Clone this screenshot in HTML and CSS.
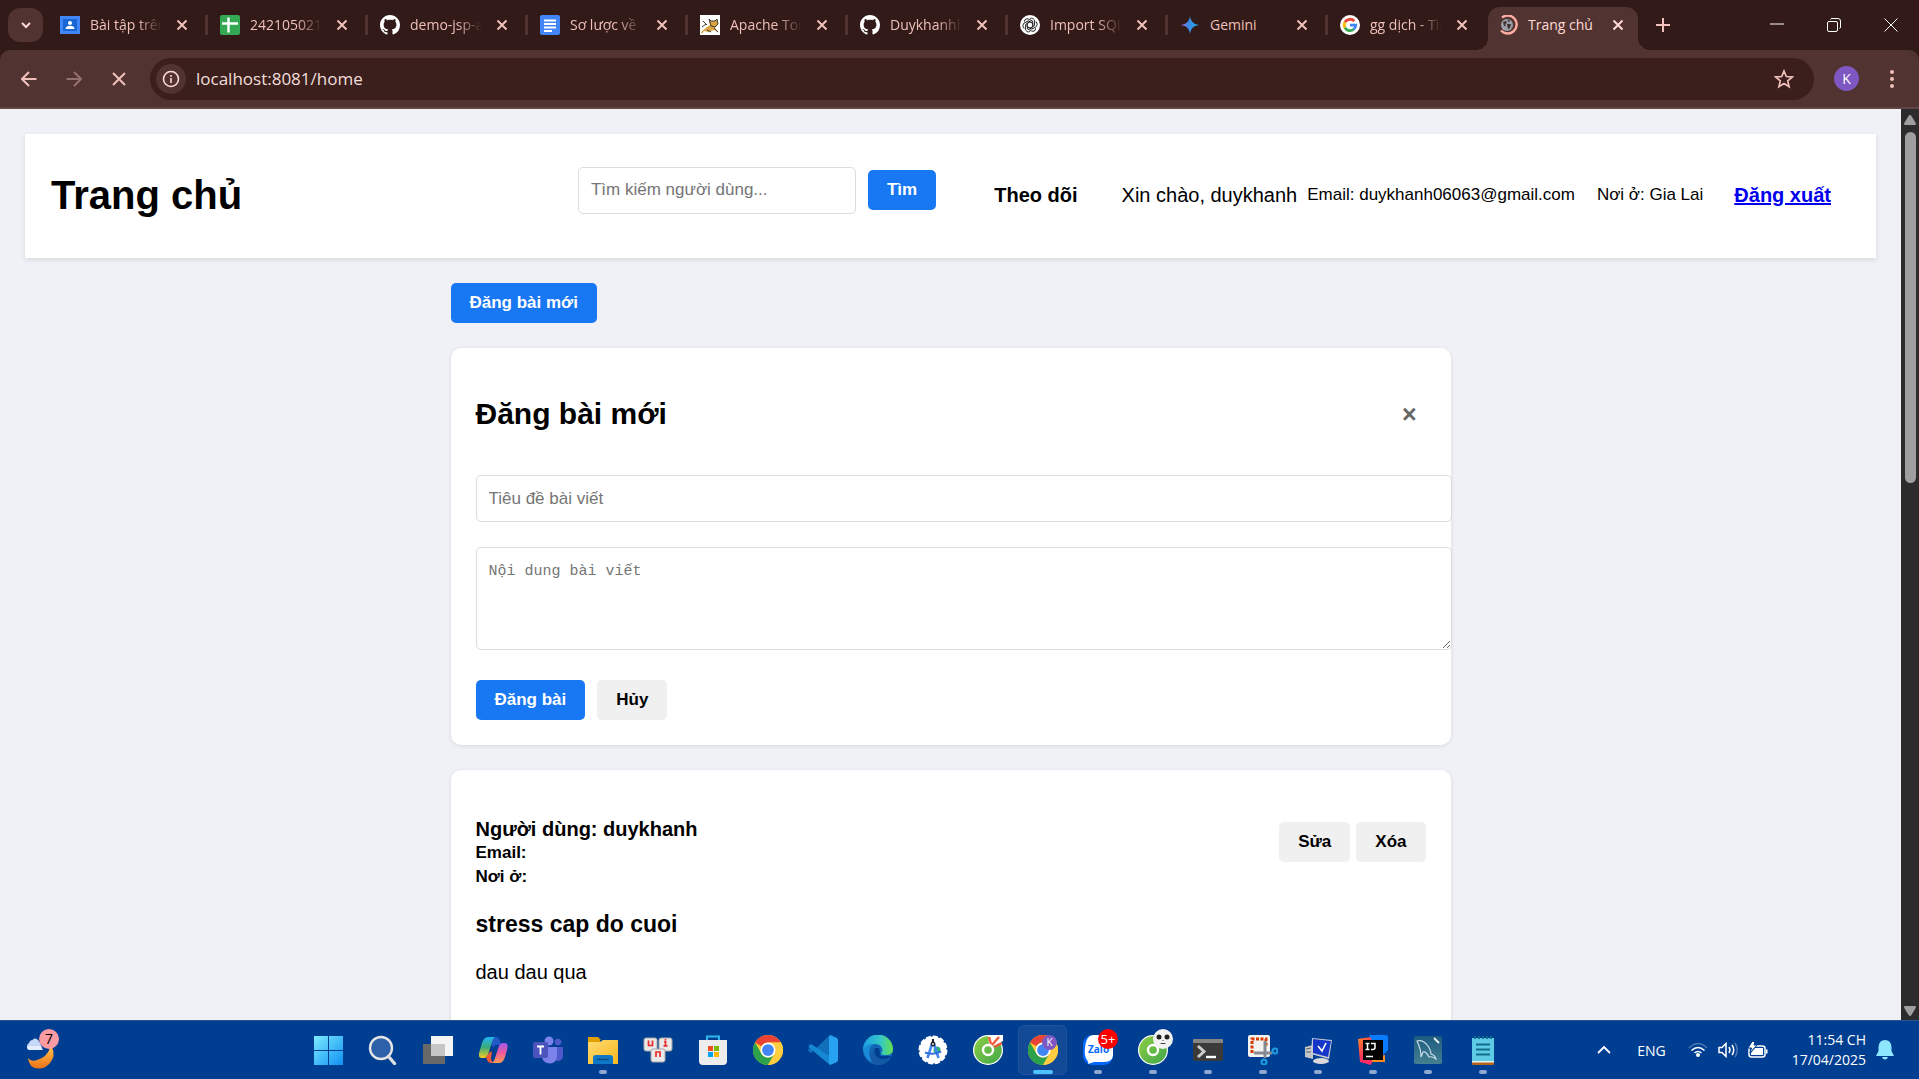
FILE: index.html
```html
<!DOCTYPE html>
<html lang="vi">
<head>
<meta charset="utf-8">
<title>Trang chủ</title>
<link rel="stylesheet" href="styles.css">
</head>
<body>
<svg class="defs" aria-hidden="true">
  <defs>
    <linearGradient id="gWin" x1="0" y1="0" x2="1" y2="1"><stop offset="0" stop-color="#7cebff"/><stop offset="1" stop-color="#0f90f2"/></linearGradient>
    <linearGradient id="gFold" x1="0" y1="0" x2="1" y2="1"><stop offset="0" stop-color="#ffdb70"/><stop offset="1" stop-color="#f8b81f"/></linearGradient>
    <linearGradient id="gMoon" x1="0" y1="0" x2="0" y2="1"><stop offset="0" stop-color="#ffc04a"/><stop offset="1" stop-color="#ee7218"/></linearGradient>
    <linearGradient id="gGem" x1="0" y1="0" x2="1" y2="0"><stop offset="0" stop-color="#a070d8"/><stop offset=".4" stop-color="#3d8ae6"/><stop offset="1" stop-color="#26a8e0"/></linearGradient>
    <linearGradient id="gCopA" x1="0" y1="0" x2="0" y2="1"><stop offset="0" stop-color="#22b4f5"/><stop offset=".5" stop-color="#3cab78"/><stop offset="1" stop-color="#f6cb22"/></linearGradient>
    <linearGradient id="gCopB" x1="0" y1="0" x2="0" y2="1"><stop offset="0" stop-color="#a257ee"/><stop offset=".5" stop-color="#ee5b9a"/><stop offset="1" stop-color="#ff9d52"/></linearGradient>
    <linearGradient id="gEdge" x1="0" y1="0" x2="1" y2="0"><stop offset="0" stop-color="#1c9fe5"/><stop offset=".6" stop-color="#35c8c4"/><stop offset="1" stop-color="#66e04c"/></linearGradient>
    <linearGradient id="gCoc" x1="0" y1="0" x2="1" y2="1"><stop offset="0" stop-color="#8fcf45"/><stop offset="1" stop-color="#3fa649"/></linearGradient>
    <linearGradient id="gIj" x1="0" y1="0" x2="1" y2="1"><stop offset="0" stop-color="#ff8a1c"/><stop offset=".5" stop-color="#ff2d63"/><stop offset="1" stop-color="#ff2d63"/></linearGradient>
    <linearGradient id="gSql" x1="0" y1="0" x2="0" y2="1"><stop offset="0" stop-color="#1e5a80"/><stop offset="1" stop-color="#44808f"/></linearGradient>
    <symbol id="x" viewBox="0 0 12 12"><path d="M1.5 1.5l9 9M10.5 1.5l-9 9" fill="none" stroke="currentColor" stroke-width="2"/></symbol>
    <symbol id="github" viewBox="0 0 16 16"><path fill="#fff" d="M8 0C3.58 0 0 3.58 0 8c0 3.54 2.29 6.53 5.47 7.59.4.07.55-.17.55-.38 0-.19-.01-.82-.01-1.49-2.01.37-2.53-.49-2.69-.94-.09-.23-.48-.94-.82-1.13-.28-.15-.68-.52-.01-.53.63-.01 1.08.58 1.23.82.72 1.21 1.87.87 2.33.66.07-.52.28-.87.51-1.07-1.78-.2-3.64-.89-3.64-3.95 0-.87.31-1.59.82-2.15-.08-.2-.36-1.02.08-2.12 0 0 .67-.21 2.2.82.64-.18 1.32-.27 2-.27s1.36.09 2 .27c1.53-1.04 2.2-.82 2.2-.82.44 1.1.16 1.92.08 2.12.51.56.82 1.27.82 2.15 0 3.07-1.87 3.75-3.65 3.95.29.25.54.73.54 1.48 0 1.07-.01 1.93-.01 2.2 0 .21.15.46.55.38A8.01 8.01 0 0 0 16 8c0-4.42-3.58-8-8-8z"/></symbol>
    <symbol id="chrome" viewBox="0 0 48 48"><circle cx="24" cy="24" r="24" fill="#fc3"/><path fill="#ea4335" d="M24 0a24 24 0 0 1 20.8 12H24a12 12 0 0 0-10.4 6L3.2 12A24 24 0 0 1 24 0z"/><path fill="#2ca24c" d="M3.2 12l10.4 18A12 12 0 0 0 24 36c4 0 8-2 10.4-6L24 48A24 24 0 0 1 3.2 12z"/><path fill="#ffcd3f" d="M44.8 12A24 24 0 0 1 24 48l10.4-18A12 12 0 0 0 24 12z"/><circle cx="24" cy="24" r="12" fill="#fff"/><circle cx="24" cy="24" r="9.4" fill="#4285f4"/></symbol>
    <symbol id="coc" viewBox="0 0 30 30"><circle cx="15" cy="15" r="14.4" fill="url(#gCoc)" stroke="#fff" stroke-width="1.2"/><circle cx="15" cy="15" r="5" fill="none" stroke="#fff" stroke-width="2.4"/></symbol>
  </defs>
</svg>

<header class="browser">
  <div class="tabstrip">
    <button class="tab-search" aria-label="Tìm thẻ"><svg viewBox="0 0 12 12" width="12" height="12"><path d="M2 4l4 4 4-4" fill="none" stroke="currentColor" stroke-width="2"/></svg></button>
    <div class="tab"><svg class="fav" viewBox="0 0 20 20"><path fill="#4285f4" d="M0 1h20v18H0z"/><path fill="#1967d2" d="M3 4h14v12H3z"/><circle cx="10" cy="8" r="2" fill="#fff"/><path fill="#fff" d="M5.500 14c0-2.500 2-3.300 4.500-3.300s4.500.8 4.500 3.300z"/></svg><span class="title">Bài tập trên lớp</span><button class="close" aria-label="Đóng"><svg><use href="#x"/></svg></button></div>
    <div class="tab"><svg class="fav" viewBox="0 0 20 20"><rect width="20" height="20" rx="2" fill="#34a853"/><path d="M2 8.500h16M8.500 2.500v15" stroke="#fff" stroke-width="2.400"/></svg><span class="title">2421050214 - bài</span><button class="close" aria-label="Đóng"><svg><use href="#x"/></svg></button></div>
    <div class="tab"><svg class="fav"><use href="#github"/></svg><span class="title">demo-jsp-app</span><button class="close" aria-label="Đóng"><svg><use href="#x"/></svg></button></div>
    <div class="tab"><svg class="fav" viewBox="0 0 20 20"><rect width="20" height="20" rx="2" fill="#4285f4"/><path d="M4 5.500h12M4 9h12M4 12.500h12M4 16h8" stroke="#fff" stroke-width="2"/></svg><span class="title">Sơ lược về web</span><button class="close" aria-label="Đóng"><svg><use href="#x"/></svg></button></div>
    <div class="tab"><svg class="fav" viewBox="0 0 20 20"><path fill="#fff" d="M0 0h20v20H0z"/><path d="M1 17l6-5 3-2-1-6 2 2h4l2-2 1 5-3 4 4 5-5-3-5 2-5-1-2 3z" fill="#d9a441"/><path d="M2 12l4-3M3 6l4 4M9 4l2 2h4l2-2 1 5-3 3-4-1zM7 15l4 2M14 13l4 4" fill="none" stroke="#3b3b30"/></svg><span class="title">Apache Tomcat</span><button class="close" aria-label="Đóng"><svg><use href="#x"/></svg></button></div>
    <div class="tab"><svg class="fav"><use href="#github"/></svg><span class="title">Duykhanhhhhh</span><button class="close" aria-label="Đóng"><svg><use href="#x"/></svg></button></div>
    <div class="tab"><svg class="fav" viewBox="0 0 20 20"><circle cx="10" cy="10" r="10" fill="#fff"/><g fill="none" stroke="#222" stroke-width=".9"><path d="M10 3.500a3 3 0 0 1 4.500 2.500v4.500L10 13.300l-2.500-1.400"/><path d="M10 3.500a3 3 0 0 1 4.500 2.500v4.500L10 13.300l-2.500-1.400" transform="rotate(60 10 10)"/><path d="M10 3.500a3 3 0 0 1 4.500 2.500v4.500L10 13.300l-2.500-1.400" transform="rotate(120 10 10)"/><path d="M10 3.500a3 3 0 0 1 4.500 2.500v4.500L10 13.300l-2.500-1.400" transform="rotate(180 10 10)"/><path d="M10 3.500a3 3 0 0 1 4.500 2.500v4.500L10 13.300l-2.500-1.400" transform="rotate(240 10 10)"/><path d="M10 3.500a3 3 0 0 1 4.500 2.500v4.500L10 13.300l-2.500-1.400" transform="rotate(300 10 10)"/></g></svg><span class="title">Import SQL file</span><button class="close" aria-label="Đóng"><svg><use href="#x"/></svg></button></div>
    <div class="tab"><svg class="fav" viewBox="0 0 20 20"><path fill="url(#gGem)" d="M10 1c.8 5.500 3.500 8.200 9 9-5.500.8-8.200 3.500-9 9-.8-5.500-3.500-8.200-9-9 5.500-.8 8.200-3.500 9-9z"/></svg><span class="title whole">Gemini</span><button class="close" aria-label="Đóng"><svg><use href="#x"/></svg></button></div>
    <div class="tab"><svg class="fav" viewBox="0 0 20 20"><circle cx="10" cy="10" r="10" fill="#fff"/><g fill="none" stroke-width="2.800"><path d="M14.300 6.200A5.700 5.700 0 0 0 5 7.200" stroke="#ea4335"/><path d="M5 7.200a5.700 5.700 0 0 0 0 5.600" stroke="#fbbc04"/><path d="M5 12.800a5.700 5.700 0 0 0 8.700 1.500" stroke="#34a853"/><path d="M13.700 14.300a5.700 5.700 0 0 0 2-4.100H10" stroke="#4285f4"/></g></svg><span class="title">gg dịch - Tìm trên</span><button class="close" aria-label="Đóng"><svg><use href="#x"/></svg></button></div>
    <div class="tab active"><svg class="fav" viewBox="0 0 20 20"><path d="M4 2.500a9 9 0 1 1-1 13" fill="none" stroke="#ffada3" stroke-width="2.400"/><circle cx="9" cy="10" r="6" fill="#9aa0a6"/><path d="M5 7l3-1 1 2-2 1 1 2-2 0zM9 9l4 0-1 4-2 1zM9 4.500l3 1-1 2z" fill="#40302f"/></svg><span class="title whole">Trang chủ</span><button class="close" aria-label="Đóng"><svg><use href="#x"/></svg></button></div>
    <button class="new-tab" aria-label="Thẻ mới"><svg viewBox="0 0 14 14" width="14" height="14"><path d="M7 0v14M0 7h14" stroke="currentColor" stroke-width="2"/></svg></button>
    <div class="window-controls">
      <button aria-label="Thu nhỏ"><svg viewBox="0 0 14 14" width="14" height="14"><path d="M0 6h14" stroke="currentColor"/></svg></button>
      <button aria-label="Khôi phục"><svg viewBox="0 0 14 14" width="14" height="14"><g fill="none" stroke="currentColor"><rect x=".5" y="3.500" width="10" height="10" rx="1.500"/><path d="M3.500 1.500q.3-1 1.500-1h6q2.500 0 2.500 2.500v6q0 1.200-1 1.500"/></g></svg></button>
      <button aria-label="Đóng cửa sổ"><svg viewBox="0 0 14 14" width="14" height="14"><path d="M.5.5l13 13M13.500.5l-13 13" stroke="currentColor"/></svg></button>
    </div>
  </div>
  <div class="toolbar">
    <button class="nav" aria-label="Quay lại"><svg viewBox="0 0 16 16"><path d="M15.500 8H1.500M8 1L1 8l7 7" fill="none" stroke="currentColor" stroke-width="2"/></svg></button>
    <button class="nav dim" aria-label="Tiến"><svg viewBox="0 0 16 16"><path d="M.5 8h14M8 1l7 7-7 7" fill="none" stroke="currentColor" stroke-width="2"/></svg></button>
    <button class="nav" aria-label="Dừng"><svg viewBox="0 0 16 16"><path d="M2 2l12 12M14 2L2 14" fill="none" stroke="currentColor" stroke-width="2"/></svg></button>
    <div class="omnibox">
      <button class="info" aria-label="Thông tin trang"><svg viewBox="0 0 18 18" width="18" height="18"><circle cx="9" cy="9" r="7.500" fill="none" stroke="currentColor" stroke-width="1.600"/><path d="M9 8v5M9 5v1.800" stroke="currentColor" stroke-width="1.600"/></svg></button>
      <input class="url" type="text" value="localhost:8081/home" aria-label="Địa chỉ">
      <button class="star" aria-label="Đánh dấu"><svg viewBox="0 0 20 20" width="20" height="20"><path d="M10 2l2.300 5.500 6 .5-4.600 3.900 1.400 5.800L10 14.600l-5.100 3.100 1.400-5.800L1.700 8l6-.5z" fill="none" stroke="currentColor" stroke-width="1.700"/></svg></button>
    </div>
    <button class="avatar" aria-label="Hồ sơ">K</button>
    <button class="dots" aria-label="Trình đơn"><svg viewBox="0 0 4 18" width="4" height="18"><g fill="currentColor"><circle cx="2" cy="2" r="2"/><circle cx="2" cy="9" r="2"/><circle cx="2" cy="16" r="2"/></g></svg></button>
  </div>
</header>

<div class="viewport">
  <div class="page">
    <header class="site-header">
      <h1>Trang chủ</h1>
      <form class="search">
        <input class="field" type="text" placeholder="Tìm kiếm người dùng..." aria-label="Tìm kiếm người dùng">
        <button class="btn primary" type="button">Tìm</button>
      </form>
      <nav class="user-nav">
        <strong class="follow">Theo dõi</strong>
        <span class="hello">Xin chào, duykhanh</span>
        <span class="meta">Email: duykhanh06063@gmail.com</span>
        <span class="meta place">Nơi ở: Gia Lai</span>
        <a class="logout" href="#">Đăng xuất</a>
      </nav>
    </header>
    <main class="feed">
      <button class="btn primary open-form" type="button">Đăng bài mới</button>
      <section class="card">
        <div class="form-head">
          <h2>Đăng bài mới</h2>
          <button class="dismiss" type="button" aria-label="Đóng">×</button>
        </div>
        <form class="post-form">
          <input class="field" type="text" placeholder="Tiêu đề bài viết" aria-label="Tiêu đề bài viết">
          <textarea class="field body" placeholder="Nội dung bài viết" aria-label="Nội dung bài viết"></textarea>
          <div class="actions">
            <button class="btn primary" type="button">Đăng bài</button>
            <button class="btn" type="button">Hủy</button>
          </div>
        </form>
      </section>
      <article class="card">
        <div class="post-head">
          <div class="author">
            <h4>Người dùng: duykhanh</h4>
            <p>Email:</p>
            <p>Nơi ở:</p>
          </div>
          <div class="post-tools">
            <button class="btn" type="button">Sửa</button>
            <button class="btn" type="button">Xóa</button>
          </div>
        </div>
        <h3>stress cap do cuoi</h3>
        <p class="post-text">dau dau qua</p>
      </article>
    </main>
  </div>
  <div class="scrollbar" aria-hidden="true">
    <svg viewBox="0 0 12 10" width="12" height="10"><path d="M6 0q.8 0 1.300.8L12 8.500q0 1.500-1 1.500H1q-1 0-1-1.500L4.700.8Q5.200 0 6 0z" fill="#9f9f9f"/></svg>
    <div class="thumb"></div>
    <svg viewBox="0 0 12 10" width="12" height="10"><path d="M6 10q.8 0 1.300-.8L12 1.500Q12 0 11 0H1Q0 0 0 1.500l4.700 7.700q.5.800 1.300.8z" fill="#9f9f9f"/></svg>
  </div>
</div>

<footer class="taskbar">
  <button class="widgets" aria-label="Thời tiết"><svg viewBox="0 0 36 44" width="36" height="44"><path d="M3 31q3 4 9 2 10-3 13-12l2-1q4 9-2 16-5 6-12 5.500Q4 41 3 31z" fill="url(#gMoon)"/><path d="M4 23a4 4 0 0 1 0-7q1-3 3.500-3Q11 9 15 16l3 7z" fill="#c6d8f8"/><path d="M2 19h14v4H4q-2-1-2-4z" fill="#e3edff"/><circle cx="24" cy="12" r="10" fill="#ff9ba3"/></svg><span class="badge">7</span></button>
  <div class="apps">
    <button class="app" aria-label="Start"><svg viewBox="0 0 30 30"><path fill="url(#gWin)" d="M1 1h14v14H1zM16 1h14v14H16zM1 16h14v14H1zM16 16h14v14H16z"/></svg></button>
    <button class="app" aria-label="Tìm kiếm"><svg viewBox="0 0 30 30"><circle cx="13" cy="13" r="11" fill="#2c60a8" stroke="#e4e4e4" stroke-width="2.400"/><path d="M20.500 21.500l6 7" stroke="#dedede" stroke-width="3.400" stroke-linecap="round"/></svg></button>
    <button class="app" aria-label="Chế độ xem"><svg viewBox="0 0 30 30"><path fill="#686868" d="M0 9h22v20H0z"/><path fill="#f5f5f5" d="M8 1h22v20H8z"/><path fill="#c6c6c6" d="M8 9h14v12H8z"/></svg></button>
    <button class="app" aria-label="Copilot"><svg viewBox="0 0 30 30"><path fill="#2558c7" d="M10 2h8q3 0 4 4l1 4h-5q-2 0-3 3z"/><path fill="url(#gCopA)" d="M10 2h7q-2 1-3 5l-4 13q-1 3-4 3H4q-4 0-3-5L4 8q2-6 6-6z"/><path fill="#ee5a33" d="M8 21q2 0 3-3l3-2-1 8q1 4 4 4h-4q-4 0-5-7z"/><path fill="url(#gCopB)" d="M21 28h-7q2-1 3-5l4-12q1-3 4-3h2q3 0 2.500 5L27 22q-2 6-6 6z"/></svg></button>
    <button class="app" aria-label="Teams"><svg viewBox="0 0 30 30"><circle cx="16" cy="6" r="4.500" fill="#7b83eb"/><circle cx="25" cy="7" r="3.300" fill="#5059c9"/><path d="M21 12h9v9a5 5 0 0 1-8 4z" fill="#5059c9"/><path d="M9 12h15v10q-1 6-7 6.500Q10 28 9 22z" fill="#7b83eb"/><rect y="7" width="15" height="16" rx="2" fill="#4b53bc"/><path d="M4 11.500h7M7.500 11.500v8" stroke="#fff" stroke-width="1.800"/></svg></button>
    <button class="app run" aria-label="Thư mục"><svg viewBox="0 0 30 30"><path d="M0 2h10l3 3h-1v4H0z" fill="#e0a100"/><path d="M0 7h12l3-2h15v24H0z" fill="url(#gFold)"/><path d="M5 29v-6q0-3 3-3h14q3 0 3 3v6z" fill="#0f78c6"/><path d="M9 24.500h12" stroke="#094c84" stroke-width="1.400"/></svg></button>
    <button class="app" aria-label="UniKey"><svg viewBox="0 0 30 30"><g fill="#e9e9e9" stroke="#a7a7a7"><rect x="1" y="3" width="13" height="13" rx="2"/><rect x="16" y="3" width="13" height="13" rx="2"/><rect x="8" y="14" width="14" height="13" rx="2"/></g><g fill="none" stroke="#ed2a2a" stroke-width="1.700"><path d="M5.500 5.500v5h4v-5M21 6.500h1.500v4M20.500 10.800h4M22.500 4v1.300M13 22v-5h4v5"/></g></svg></button>
    <button class="app" aria-label="Store"><svg viewBox="0 0 30 30"><path d="M9 6V1.500h12V6" fill="none" stroke="#31b7ee" stroke-width="2"/><path d="M1 5h28v21q0 4-4 4H5q-4 0-4-4z" fill="#ededed"/><path d="M10 11h5v5h-5z" fill="#f25022"/><path d="M16 11h5v5h-5z" fill="#7fba00"/><path d="M10 17h5v5h-5z" fill="#00a4ef"/><path d="M16 17h5v5h-5z" fill="#ffb900"/></svg></button>
    <button class="app" aria-label="Chrome"><svg><use href="#chrome"/></svg></button>
    <button class="app" aria-label="VS Code"><svg viewBox="0 0 30 30"><path d="M22 0L3 18l-2.500-2q-1-1 0-2L3 12l20 16-1 2z" fill="#0f6fba"/><path d="M22 30L1 12.500q-1-1 0-2L3 9l20 13z" fill="#1588d4"/><path d="M22 0l6 2.500q2 .8 2 2.500v20q0 1.700-2 2.500L22 30l-1-2V2z" fill="#27a2f0"/></svg></button>
    <button class="app" aria-label="Edge"><svg viewBox="0 0 30 30"><circle cx="15" cy="15" r="15" fill="#1266b5"/><path d="M0 15A15 15 0 0 1 30 14q0 6-7 6-5 0-5-2 2-2 1-5-2-4-7-4Q3 9 0 15z" fill="url(#gEdge)"/><path d="M12 9q-3 0-5 4-3 8 4 14-9-1-11-12 4-7 12-6z" fill="#1b8ad8"/><path d="M12 13q-2 6 3 10 5 3 13-1l2-4v3L18 21q-2-1-1-3l-1-5z" fill="#003e92"/><path d="M12 13q-3 8 5 11 5 1.500 10-1-3 6-10 7-8 0-10-8 0-6 5-9z" fill="#1459a4"/></svg></button>
    <button class="app" aria-label="Android Studio"><svg viewBox="0 0 30 30"><circle cx="15" cy="15" r="13.500" fill="#fff"/><circle cx="15" cy="15" r="13.500" fill="none" stroke="#fff" stroke-width="2" stroke-dasharray="5 2"/><circle cx="19" cy="15" r="3.500" fill="#2cb36a"/><path d="M14 9L9.500 23M16 9l4.500 14" stroke="#4285f4" stroke-width="2.600"/><path d="M7 17.500q8 3 16-1" stroke="#3272dd" stroke-width="2" fill="none"/><circle cx="15" cy="9" r="2.400" fill="#202124"/><circle cx="15" cy="9" r=".9" fill="#fff"/><path d="M15 4v3" stroke="#202124" stroke-width="2"/></svg></button>
    <button class="app" aria-label="Cốc Cốc"><svg viewBox="0 0 30 30"><use href="#coc"/><path d="M15 0h15v6l-9 5-5-2z" fill="#fff"/><path d="M16 2l2 7M26 2l-7 8M29 8l-8 4" stroke="#f05a38" stroke-width="2.400"/></svg></button>
    <button class="app run current" aria-label="Chrome K"><svg><use href="#chrome"/></svg><span class="profile">K</span></button>
    <button class="app run" aria-label="Zalo"><svg viewBox="0 0 30 30"><rect width="30" height="30" rx="9" fill="#0068ff"/><path d="M11 0h11q8 0 8 9v11q0 7-9 7H11l-6 2q1-2-1-4-3-4-2-12Q3 0 11 0z" fill="#fff"/></svg><span class="zalo">Zalo</span><span class="count">5+</span></button>
    <button class="app run" aria-label="Cốc Cốc 2"><svg><use href="#coc"/></svg><svg class="panda" viewBox="0 0 20 20"><circle cx="10" cy="10" r="10" fill="#f2f2f2"/><circle cx="6" cy="8" r="2.500" fill="#222"/><circle cx="14" cy="8" r="2.500" fill="#222"/><path d="M7.500 14.500h5M10 11v1" stroke="#444"/></svg></button>
    <button class="app run" aria-label="Terminal"><svg viewBox="0 0 30 30"><rect y="4" width="30" height="22" rx="1" fill="#3a3a3a"/><path d="M0 5q0-1 1-1h28q1 0 1 1v3H0z" fill="#858585"/><path d="M5 11l6 5.500L5 22" fill="none" stroke="#ccc" stroke-width="3"/><path d="M13 22h10" stroke="#fff" stroke-width="2.400"/></svg></button>
    <button class="app run" aria-label="Công cụ cắt"><svg viewBox="0 0 30 30"><rect width="22" height="22" rx="2" fill="#f3f3f3"/><path d="M4 18V4h14v7" fill="none" stroke="#d83b01" stroke-width="3" stroke-dasharray="3 1.500"/><path d="M17 6v17M6 18h18" stroke="#858b93" stroke-width="3"/><circle cx="27" cy="16" r="2.500" fill="none" stroke="#1b9de2" stroke-width="2"/><circle cx="16" cy="27" r="2.500" fill="none" stroke="#1b9de2" stroke-width="2"/></svg></button>
    <button class="app run" aria-label="Máy tính"><svg viewBox="0 0 30 30"><path d="M2 12l8-2v14l-8-2z" fill="#c4c7ca"/><path d="M3 14l5-1M3 17h5" stroke="#5b6268"/><ellipse cx="18" cy="26" rx="8" ry="3" fill="#dadada"/><path d="M9 3l20 2-3 19-18-5z" fill="#c9ccd3"/><path d="M10 4l18 2-3 16-15-4z" fill="#1636c9"/><path d="M15 11l4 5 4-8" fill="none" stroke="#fff" stroke-width="1.600"/></svg></button>
    <button class="app run" aria-label="IntelliJ IDEA"><svg viewBox="0 0 30 30"><path d="M0 4l13-2 6 10-6 18L2 27z" fill="url(#gIj)"/><path d="M11 0h17q2 0 2 2v13l-7 7z" fill="#087cfa"/><path d="M27 20v7H14v-5z" fill="#ff8a1c"/><path d="M5 5h20v20H5z" fill="#000"/><path d="M7.500 8.500h4M9.500 8.500v6M7.500 14.500h4M13 8.500h4v4q0 2-2.200 2H13M8 21.500h7" fill="none" stroke="#fff" stroke-width="1.500"/></svg></button>
    <button class="app run" aria-label="MySQL Workbench"><svg viewBox="0 0 30 30"><rect x="1" y="1" width="28" height="28" rx="2" fill="url(#gSql)"/><path d="M4 6q6-2 11 5 3 5 3 8 4 1 5 5-4-3-7-2-3-6-6-5l-2 5Q8 14 4 6z" fill="none" stroke="#c7dde6" stroke-width="1.200"/><path d="M21 3l5 5" stroke="#e6eef2" stroke-width="2"/></svg></button>
    <button class="app run" aria-label="Notepad"><svg viewBox="0 0 30 30"><path d="M4 3h22v24H4z" fill="#5ecbe4"/><path d="M4 26h22v3q0 1-1 1H5q-1 0-1-1z" fill="#b4631b"/><path d="M4 26h22v1.500H4z" fill="#e9f1f2"/><path d="M8 9.500h14M8 14.500h14M8 19.500h14" stroke="#126c8a" stroke-width="1.800"/><path d="M7 1v3M11 1v3M15 1v3M19 1v3M23 1v3" stroke="#126c8a" stroke-width="1.800"/></svg></button>
  </div>
  <div class="tray">
    <button class="chev" aria-label="Biểu tượng ẩn"><svg viewBox="0 0 14 10" width="14" height="10"><path d="M1 8l6-6 6 6" fill="none" stroke="currentColor" stroke-width="1.800"/></svg></button>
    <span class="lang">ENG</span>
    <button class="status" aria-label="Trạng thái">
      <svg viewBox="0 0 20 16" width="20" height="16"><g fill="none" stroke="#fff" stroke-width="1.600"><path d="M1 6q9-9 18 0" opacity=".3"/><path d="M3.500 8.500q6.500-6 13 0M6.500 11q3.500-3 7 0"/></g><circle cx="10" cy="13" r="2" fill="#fff"/></svg>
      <svg viewBox="0 0 20 16" width="20" height="16"><g fill="none" stroke="#fff" stroke-width="1.500"><path d="M1 5.500h3l4-4v13l-4-4H1z"/><path d="M11 5q2 3 0 6M14 3q3.500 5 0 10"/><path d="M17 1q4.500 7 0 14" opacity=".3"/></g></svg>
      <svg viewBox="0 0 20 16" width="20" height="16"><rect x="1" y="4" width="16" height="11" rx="2.500" fill="none" stroke="#fff" stroke-width="1.500"/><path d="M7 6h8v7H3v-2z" fill="#fff"/><path d="M18 7.500h1.500v4H18z" fill="#fff"/><path d="M4-.5h3L6 3h3L2 11l1.500-5H0z" fill="#fff" stroke="#003e92"/></svg>
    </button>
    <time class="clock" datetime="2025-04-17T11:54">11:54 CH<br>17/04/2025</time>
    <button class="bell" aria-label="Thông báo"><svg viewBox="0 0 18 20" width="18" height="20"><path d="M9 0q6 0 6.500 7v4L18 16H0l2.500-5V7Q3 0 9 0zM6 17h6q-1 2.500-3 2.500T6 17z" fill="#8fe6ff"/></svg></button>
  </div>
</footer>
</body>
</html>
```
FILE: styles.css
```css
* { box-sizing: border-box; }

body {
  margin: 0;
  height: 100vh;
  display: flex;
  flex-direction: column;
  overflow: hidden;
  font-family: "Liberation Sans", Arial, sans-serif;
  font-size: 20px;
  color: #000;
}

button {
  margin: 0;
  padding: 0;
  border: 0;
  background: none;
  color: inherit;
  font: inherit;
}

svg { display: block; flex: none; }
.defs { position: absolute; width: 0; height: 0; }

/* Browser frame */
.browser {
  flex: none;
  background: #311a17;
  color: #f0c0ba;
  font-family: "Open Sans", "Noto Sans", sans-serif;
  font-size: 14px;
}

.tabstrip {
  display: flex;
  align-items: center;
  height: 50px;
}

.tab-search {
  display: grid;
  place-items: center;
  flex: none;
  width: 35px;
  height: 34px;
  margin: 0 5px 0 8px;
  border-radius: 12px;
  background: #513331;
  color: #ffdad5;
}

.tab {
  flex: 0 1 160px;
  min-width: 0;
  display: flex;
  align-items: center;
  gap: 10px;
  padding: 0 16px 0 12px;
  background: linear-gradient(#513331, #513331) right 0 center / 3px 20px no-repeat;
}

.tab:has(+ .active) { background: none; }

.fav { width: 20px; height: 20px; }

.title {
  flex: 1;
  min-width: 0;
  overflow: hidden;
  white-space: nowrap;
  line-height: 20px;
  -webkit-mask-image: linear-gradient(to right, #000 65%, transparent);
  mask-image: linear-gradient(to right, #000 65%, transparent);
}
.title.whole { -webkit-mask-image: none; mask-image: none; }

.close {
  display: grid;
  place-items: center;
  flex: none;
  width: 20px;
  height: 20px;
}
.close svg { width: 12px; height: 12px; }

.tab.active {
  flex-basis: 150px;
  align-self: stretch;
  margin-top: 7px;
  padding: 0 10px 7px;
  border-radius: 12px 12px 0 0;
  background: #513331;
  color: #ffdad5;
  position: relative;
}

.tab.active::before,
.tab.active::after {
  content: "";
  position: absolute;
  bottom: 0;
  width: 12px;
  height: 12px;
}
.tab.active::before { right: 100%; background: radial-gradient(circle at 0 0, transparent 12px, #513331 12px); }
.tab.active::after { left: 100%; background: radial-gradient(circle at 100% 0, transparent 12px, #513331 12px); }

.new-tab { margin-left: 18px; }

.window-controls {
  display: flex;
  margin-left: auto;
  color: #fff;
}
.window-controls button {
  display: grid;
  place-items: center;
  width: 57px;
  height: 48px;
}

.toolbar {
  display: flex;
  align-items: center;
  height: 59px;
  padding: 0 25px 0 6px;
  border-bottom: 2px solid #5f4644;
  border-radius: 10px 10px 0 0;
  background: #513331;
}

.nav {
  display: grid;
  place-items: center;
  width: 45px;
  height: 44px;
}
.nav svg { width: 16px; height: 16px; }
.nav.dim { color: #94716e; }

.omnibox {
  flex: 1;
  display: flex;
  align-items: center;
  height: 42px;
  margin-left: 9px;
  padding: 0 20px 0 6px;
  border-radius: 21px;
  background: #3a1f1c;
}

.info {
  display: grid;
  place-items: center;
  width: 30px;
  height: 30px;
  border-radius: 50%;
  background: #513331;
  color: #ffdad5;
}

.url {
  flex: 1;
  margin: 0 0 0 10px;
  padding: 0;
  border: 0;
  background: none;
  color: #f3dedb;
  font: 17px/24px "Open Sans", "Noto Sans", sans-serif;
}

.avatar {
  width: 25px;
  height: 25px;
  margin: 0 31px 0 20px;
  border-radius: 50%;
  background: #7e57c2;
  color: #fff;
}

/* Page */
.viewport {
  flex: 1;
  min-height: 0;
  display: flex;
}

.page {
  flex: 1;
  min-width: 0;
  overflow: hidden;
  padding: 25px;
  background: #f0f1f6;
}

.scrollbar {
  flex: none;
  width: 18px;
  display: flex;
  flex-direction: column;
  align-items: center;
  padding: 6px 0 4px;
  background: #2c2c2c;
}
.thumb {
  width: 11px;
  height: 39%;
  margin: 7px 0 auto;
  border-radius: 6px;
  background: #9f9f9f;
}

.site-header {
  display: flex;
  align-items: center;
  padding: 12px 26px;
  background: #fff;
  box-shadow: 0 2px 5px rgba(0, 0, 0, 0.1);
}

h1 {
  margin: 26px 0 28px;
  font-size: 40px;
  line-height: 46px;
}

.search {
  display: flex;
  align-items: center;
  gap: 12px;
  margin: 0 58px 12px auto;
}
.search .field { width: 278px; }

.field {
  height: 47px;
  padding: 0 12px;
  border: 1px solid #ddd;
  border-radius: 5px;
  background: #fff;
  font: 17px/20px "Liberation Sans", Arial, sans-serif;
}
.field::placeholder { color: #757575; }

.btn {
  height: 40px;
  padding: 0 19px;
  border-radius: 5px;
  background: #f0f0f0;
  color: #000;
  font-size: 17px;
  font-weight: bold;
  line-height: 20px;
}
.btn.primary { background: #1877f2; color: #fff; }

.user-nav {
  display: flex;
  align-items: center;
  margin: 0 19px 2px 0;
  line-height: 24px;
  white-space: nowrap;
}
.hello { margin: 0 10px 0 44px; }
.meta { font-size: 17px; }
.place { margin: 0 31px 0 22px; }
.logout { color: #0000ee; font-weight: bold; }

.feed {
  max-width: 1000px;
  margin: 25px auto 0;
}
.open-form { display: block; }

.card {
  margin-top: 25px;
  padding: 25px;
  border-radius: 10px;
  background: #fff;
  box-shadow: 0 1px 4px rgba(0, 0, 0, 0.1);
}

.form-head {
  display: flex;
  align-items: center;
  justify-content: space-between;
  margin-bottom: 20px;
}
h2 {
  margin: 24px 0;
  font-size: 30px;
  line-height: 34px;
}
.dismiss {
  padding: 0 9px;
  color: #666;
  font-size: 25px;
  font-weight: bold;
  line-height: 28px;
}

/* Fields keep their padding outside the full width, so they reach past the card edge */
.post-form .field {
  display: block;
  box-sizing: content-box;
  width: 100%;
  height: 45px;
  margin-bottom: 25px;
}
.post-form .body {
  height: 77px;
  margin-bottom: 30px;
  padding: 12px;
  font: 15px/24px "Liberation Mono", Consolas, monospace;
}

.actions { display: flex; gap: 12px; }

.post-head {
  display: flex;
  align-items: center;
  justify-content: space-between;
}
h4 {
  margin: 22px 0 0;
  font-size: 20px;
  line-height: 24px;
}
.author p {
  margin: 0;
  font-size: 17px;
  font-weight: bold;
  line-height: 24px;
}
.post-tools { display: flex; gap: 6px; }

h3 {
  margin: 22px 0;
  font-size: 23px;
  line-height: 27px;
}
.post-text {
  margin: 0 0 50px;
  line-height: 24px;
}

/* Taskbar */
.taskbar {
  flex: none;
  display: flex;
  align-items: center;
  height: 59px;
  border-top: 1px solid #2a5590;
  background: #003e92;
  color: #fff;
  font-family: "Open Sans", "Noto Sans", sans-serif;
  font-size: 14px;
}

.widgets {
  position: relative;
  align-self: flex-start;
  flex: none;
  width: 275px;
  margin: 6px 0 0 25px;
}
.badge {
  position: absolute;
  left: 14px;
  top: 2px;
  width: 20px;
  color: #000;
  line-height: 20px;
}

.apps { display: flex; }

.app {
  position: relative;
  display: grid;
  place-items: center;
  width: 55px;
  height: 50px;
}
.app svg { width: 30px; height: 30px; }

.app.run::after {
  content: "";
  position: absolute;
  bottom: 1px;
  left: 24px;
  width: 8px;
  height: 4px;
  border-radius: 2px;
  background: #8fa8d2;
}
.app.current::before {
  content: "";
  position: absolute;
  inset: 0 3px;
  border: 1px solid #1f549d;
  border-radius: 6px;
  background: #134a98;
}
.app.current svg { position: relative; }
.app.current::after { left: 18px; width: 20px; background: #4cc2ff; }

.profile,
.count {
  position: absolute;
  text-align: center;
  border-radius: 50%;
}
.profile {
  left: 27px;
  top: 10px;
  width: 15px;
  height: 15px;
  background: #7e57c2;
  font-size: 10px;
  line-height: 15px;
}
.zalo {
  position: absolute;
  left: 18px;
  top: 16px;
  color: #0068ff;
  font-size: 10px;
  font-weight: bold;
  line-height: 16px;
}
.count {
  left: 28px;
  top: 4px;
  width: 20px;
  height: 20px;
  background: #f00;
  font-size: 13px;
  line-height: 20px;
}
.app .panda {
  position: absolute;
  left: 28px;
  top: 4px;
  width: 20px;
  height: 20px;
}

.tray {
  display: flex;
  align-items: center;
  margin-left: auto;
  padding-right: 25px;
}
.lang { margin: 0 22px 0 26px; }
.status { display: flex; gap: 10px; }
.clock {
  margin: 0 10px 0 24px;
  line-height: 20px;
  text-align: right;
}
```
